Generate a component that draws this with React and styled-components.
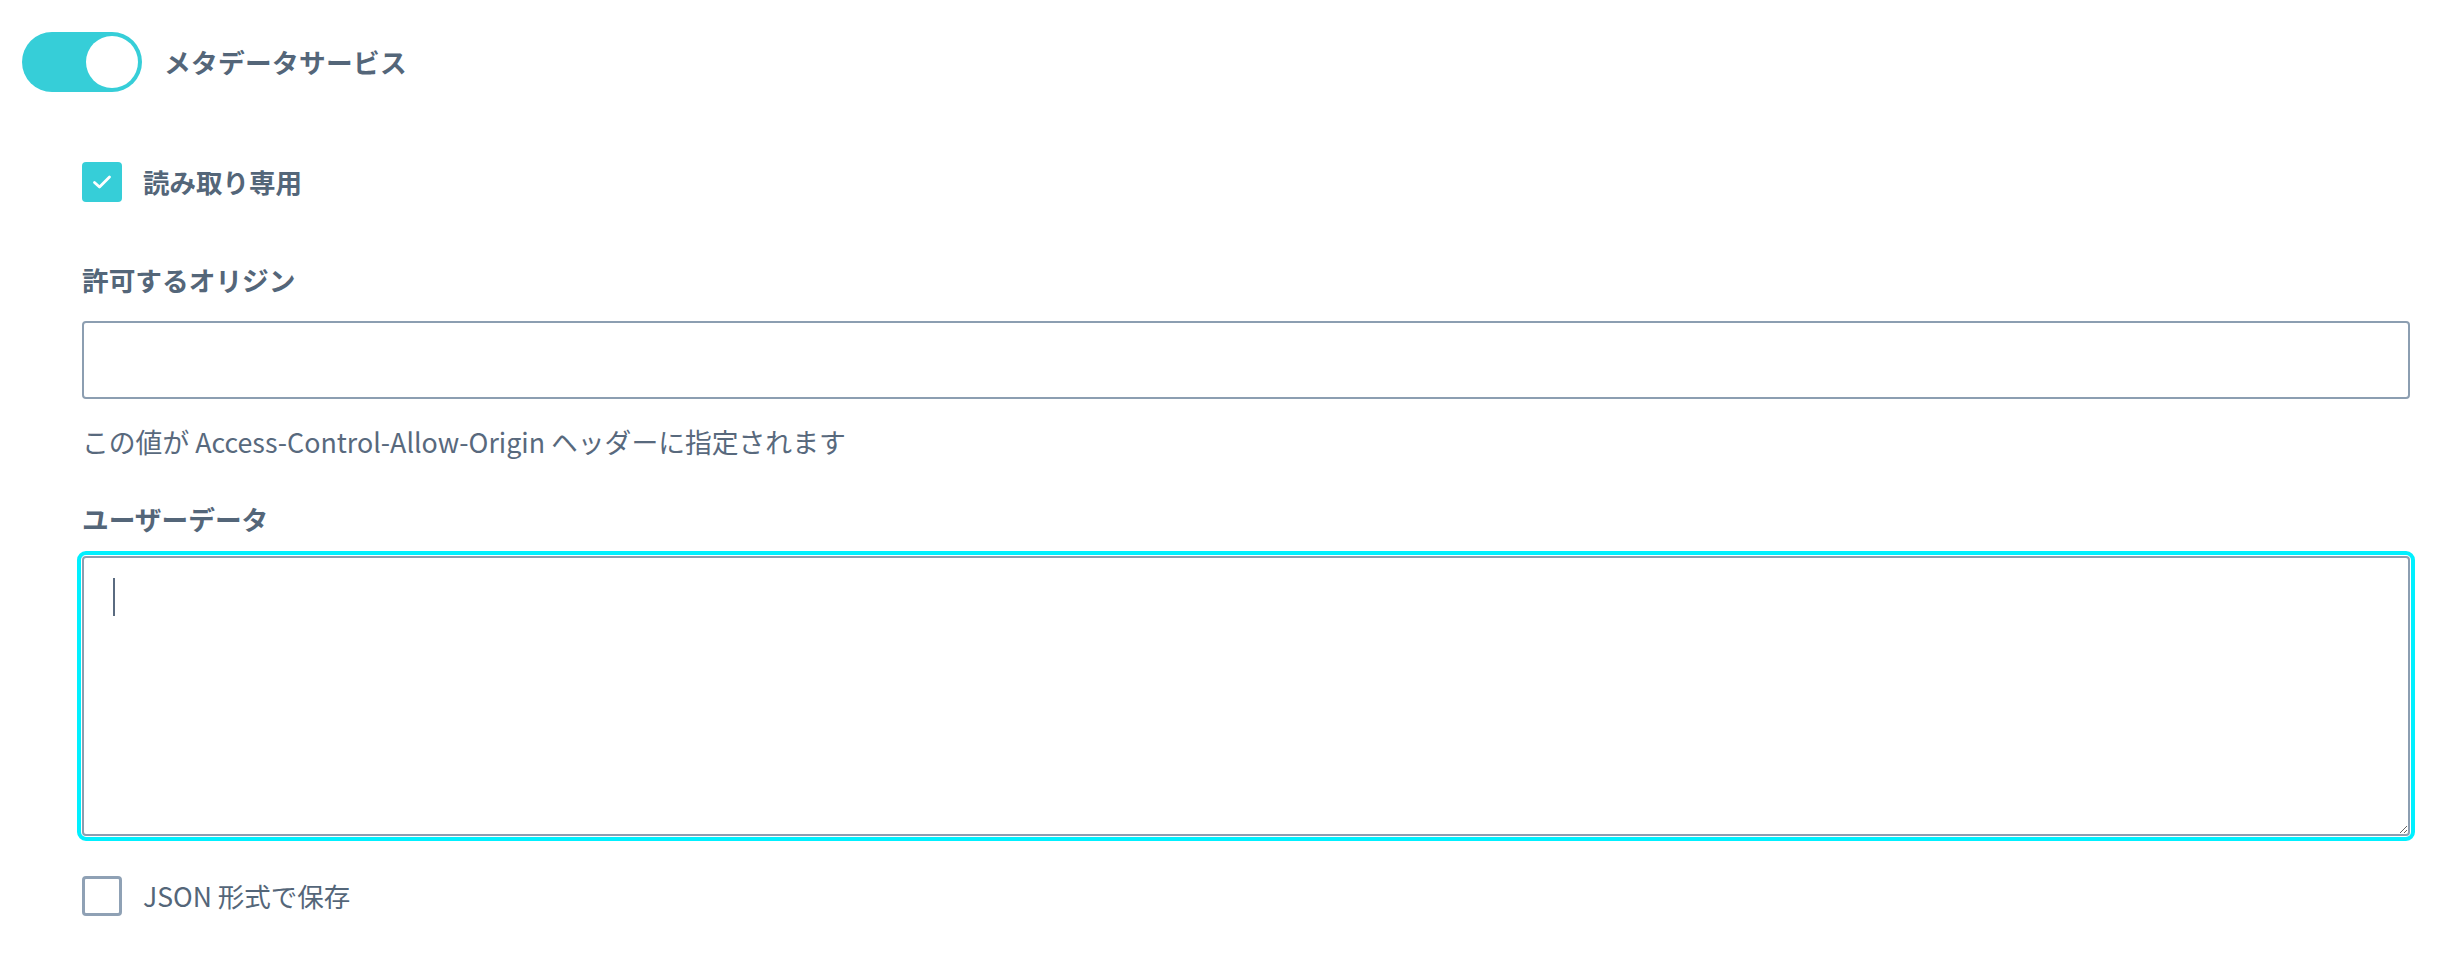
import React from "react";
import styled, { createGlobalStyle } from "styled-components";

const GlobalStyle = createGlobalStyle`
  html, body {
    margin: 0;
    padding: 0;
    background: #fff;
  }
  body {
    font-family: "Noto Sans CJK JP", "Noto Sans", sans-serif;
    color: #58697d;
  }
`;

export default function App() {
  return (
    <>
      <GlobalStyle />
      <Page>
        <ToggleRow>
          <Switch $on>
            <Knob />
          </Switch>
          <SwitchLabel>メタデータサービス</SwitchLabel>
        </ToggleRow>

        <Section>
          <CheckRow>
            <CheckBox $checked>
              <svg width="20" height="16" viewBox="0 0 20 16">
                <path
                  d="M2.5 8.5 L7.5 13 L17.5 3"
                  fill="none"
                  stroke="#fff"
                  strokeWidth="2.8"
                  strokeLinecap="round"
                  strokeLinejoin="round"
                />
              </svg>
            </CheckBox>
            <CheckLabel $bold>読み取り専用</CheckLabel>
          </CheckRow>

          <FieldLabel>許可するオリジン</FieldLabel>
          <TextInput type="text" />
          <HelpText>この値が Access-Control-Allow-Origin ヘッダーに指定されます</HelpText>

          <FieldLabel $tight>ユーザーデータ</FieldLabel>
          <AreaWrap>
            <TextArea />
            <Caret />
          </AreaWrap>

          <CheckRow $last>
            <CheckBox />
            <CheckLabel>JSON 形式で保存</CheckLabel>
          </CheckRow>
        </Section>
      </Page>
    </>
  );
}

const Page = styled.div`
  padding: 32px 44px 40px 22px;
`;

const ToggleRow = styled.div`
  display: flex;
  align-items: center;
  gap: 22px;
  height: 60px;
`;

const Switch = styled.div`
  box-sizing: border-box;
  width: 120px;
  height: 60px;
  border-radius: 30px;
  padding: 4px;
  background: ${(p) => (p.$on ? "#36ced8" : "#c9d3dd")};
  display: flex;
  justify-content: ${(p) => (p.$on ? "flex-end" : "flex-start")};
`;

const Knob = styled.div`
  width: 52px;
  height: 52px;
  border-radius: 50%;
  background: #fff;
`;

const SwitchLabel = styled.span`
  font-size: 26.7px;
  font-weight: 700;
  line-height: 36px;
  letter-spacing: 0.3px;
  color: #546679;
`;

const Section = styled.div`
  padding-left: 60px;
  display: flex;
  flex-direction: column;
`;

const CheckRow = styled.div`
  display: flex;
  align-items: center;
  gap: 21px;
  height: 40px;
  margin-top: ${(p) => (p.$last ? "40px" : "70px")};
`;

const CheckBox = styled.div`
  box-sizing: border-box;
  width: 40px;
  height: 40px;
  border-radius: 4px;
  display: flex;
  align-items: center;
  justify-content: center;
  background: ${(p) => (p.$checked ? "#36ced8" : "#fff")};
  border: ${(p) => (p.$checked ? "none" : "3px solid #8fa1b5")};
`;

const CheckLabel = styled.span`
  font-size: 26.5px;
  line-height: 36px;
  font-weight: ${(p) => (p.$bold ? 700 : 400)};
  color: #546679;
`;

const FieldLabel = styled.div`
  font-size: 26.7px;
  line-height: 36px;
  font-weight: 700;
  color: #546679;
  margin-top: ${(p) => (p.$tight ? "41px" : "60px")};
  margin-bottom: ${(p) => (p.$tight ? "19px" : "23px")};
`;

const TextInput = styled.input`
  box-sizing: border-box;
  width: 100%;
  height: 78px;
  border: 2px solid #8c9eb1;
  border-radius: 4px;
  padding: 0 28px;
  font-family: inherit;
  font-size: 26.5px;
  color: #546679;
  background: #fff;
  outline: none;
`;

const HelpText = styled.div`
  font-size: 26.8px;
  line-height: 36px;
  color: #58697d;
  margin-top: 25px;
`;

const AreaWrap = styled.div`
  position: relative;
  width: 100%;
`;

const TextArea = styled.textarea`
  display: block;
  box-sizing: border-box;
  width: 100%;
  height: 280px;
  border: 2px solid #8c9eb1;
  border-radius: 4px;
  padding: 20px 28px;
  font-family: inherit;
  font-size: 26.5px;
  line-height: 38px;
  color: #546679;
  background: #fff;
  outline: 4px solid #00f0ff;
  outline-offset: 1px;
  caret-color: transparent;
  resize: vertical;
`;

const Caret = styled.span`
  position: absolute;
  left: 31px;
  top: 22px;
  width: 2px;
  height: 38px;
  background: #5a6b80;
`;
